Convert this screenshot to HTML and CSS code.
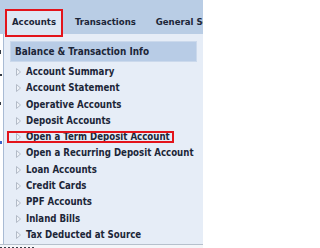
FILE: index.html
```html
<!DOCTYPE html>
<html>
<head>
<meta charset="utf-8">
<link rel="stylesheet" href="styles.css">
</head>
<body>
<div class="topbar">
  <div class="tab active">Accounts</div>
  <div class="tab">Transactions</div>
  <div class="tab">General Services</div>
</div>
<div class="main">
  <div class="underlay">
    <span class="mark m1"></span>
    <span class="mark m2"></span>
    <span class="mark m3"></span>
    <span class="mark m4 blue"></span>
  </div>
  <div class="panel">
    <div class="heading">Balance &amp; Transaction Info</div>
    <ul class="items">
      <li class="item"><svg class="arrow" width="5" height="8" viewBox="0 0 5 8"><path d="M0.5 0.5 L4.5 4 L0.5 7.5 Z" fill="#eef2f8" stroke="#b3bbc7" stroke-width="1"/></svg>Account Summary</li>
      <li class="item"><svg class="arrow" width="5" height="8" viewBox="0 0 5 8"><path d="M0.5 0.5 L4.5 4 L0.5 7.5 Z" fill="#eef2f8" stroke="#b3bbc7" stroke-width="1"/></svg>Account Statement</li>
      <li class="item"><svg class="arrow" width="5" height="8" viewBox="0 0 5 8"><path d="M0.5 0.5 L4.5 4 L0.5 7.5 Z" fill="#eef2f8" stroke="#b3bbc7" stroke-width="1"/></svg>Operative Accounts</li>
      <li class="item"><svg class="arrow" width="5" height="8" viewBox="0 0 5 8"><path d="M0.5 0.5 L4.5 4 L0.5 7.5 Z" fill="#eef2f8" stroke="#b3bbc7" stroke-width="1"/></svg>Deposit Accounts</li>
      <li class="item marked"><svg class="arrow" width="5" height="8" viewBox="0 0 5 8"><path d="M0.5 0.5 L4.5 4 L0.5 7.5 Z" fill="#eef2f8" stroke="#b3bbc7" stroke-width="1"/></svg>Open a Term Deposit Account</li>
      <li class="item"><svg class="arrow" width="5" height="8" viewBox="0 0 5 8"><path d="M0.5 0.5 L4.5 4 L0.5 7.5 Z" fill="#eef2f8" stroke="#b3bbc7" stroke-width="1"/></svg>Open a Recurring Deposit Account</li>
      <li class="item"><svg class="arrow" width="5" height="8" viewBox="0 0 5 8"><path d="M0.5 0.5 L4.5 4 L0.5 7.5 Z" fill="#eef2f8" stroke="#b3bbc7" stroke-width="1"/></svg>Loan Accounts</li>
      <li class="item"><svg class="arrow" width="5" height="8" viewBox="0 0 5 8"><path d="M0.5 0.5 L4.5 4 L0.5 7.5 Z" fill="#eef2f8" stroke="#b3bbc7" stroke-width="1"/></svg>Credit Cards</li>
      <li class="item"><svg class="arrow" width="5" height="8" viewBox="0 0 5 8"><path d="M0.5 0.5 L4.5 4 L0.5 7.5 Z" fill="#eef2f8" stroke="#b3bbc7" stroke-width="1"/></svg>PPF Accounts</li>
      <li class="item"><svg class="arrow" width="5" height="8" viewBox="0 0 5 8"><path d="M0.5 0.5 L4.5 4 L0.5 7.5 Z" fill="#eef2f8" stroke="#b3bbc7" stroke-width="1"/></svg>Inland Bills</li>
      <li class="item"><svg class="arrow" width="5" height="8" viewBox="0 0 5 8"><path d="M0.5 0.5 L4.5 4 L0.5 7.5 Z" fill="#eef2f8" stroke="#b3bbc7" stroke-width="1"/></svg>Tax Deducted at Source</li>
    </ul>
  </div>
</div>
<div class="bottom"></div>
</body>
</html>
```

FILE: styles.css
```css
html, body {
  margin: 0;
  padding: 0;
}
body {
  width: 203px;
  height: 248px;
  overflow: hidden;
  background: #ffffff;
  font-family: "DejaVu Sans Condensed", "DejaVu Sans", sans-serif;
  font-weight: bold;
  color: #1c2638;
}
.topbar {
  height: 34px;
  box-sizing: border-box;
  background: #b9cde5;
  display: flex;
  gap: 4px;
  padding: 9px 0 0 5px;
  white-space: nowrap;
  position: relative;
  z-index: 2;
  overflow: visible;
}
.tab {
  height: 28px;
  box-sizing: border-box;
  border: 2px solid transparent;
  padding: 5px 6px 0 6px;
  font-size: 9.5px;
  line-height: 12px;
  flex-shrink: 0;
}
.tab.active {
  border-color: #e3141b;
  background: #dde7f4;
  padding: 5px 5px 0 5px;
}
.main {
  display: flex;
  height: 210px;
}
.underlay {
  width: 3px;
  flex-shrink: 0;
  display: flex;
  flex-direction: column;
  background: #fff;
  border-right: 1px solid #a9bbd4;
}
.mark {
  display: block;
  width: 2px;
  height: 2px;
  background: #333a44;
}
.m1 { margin-top: 16px; height: 4px; width: 1px; }
.m2 { margin-top: 20px; }
.m3 { margin-top: 26px; height: 3px; width: 1px; }
.m4 { margin-top: 36px; height: 3px; }
.blue { background: #3a64c8; }
.panel {
  flex: 1;
  background: #e6edf7;
  padding: 7px 0 1px 6px;
  overflow: hidden;
}
.heading {
  width: 187px;
  height: 21px;
  box-sizing: border-box;
  background: #b8cce6;
  border: 1px solid #cbd9ec;
  padding-left: 4px;
  font-size: 9.9px;
  line-height: 19px;
  white-space: nowrap;
}
.items {
  list-style: none;
  margin: 2px 0 0 0;
  padding: 0;
}
.item {
  height: 16.3px;
  line-height: 16.3px;
  font-size: 9.6px;
  white-space: nowrap;
  display: flex;
  align-items: center;
  padding-left: 6px;
  position: relative;
}
.arrow {
  display: block;
  flex-shrink: 0;
  margin-right: 5px;
}
.item.marked::after {
  content: "";
  position: absolute;
  left: -3px;
  top: 2px;
  width: 167px;
  height: 12px;
  box-sizing: border-box;
  border: 2px solid #e3141b;
}
.bottom {
  height: 4px;
  border-top: 1px solid #b6c0cc;
  background:
    repeating-linear-gradient(90deg, #3a3f48 0 2px, #f4f6f9 2px 4px) 0 2px / 34px 2px no-repeat,
    #f4f6f9;
}
```
